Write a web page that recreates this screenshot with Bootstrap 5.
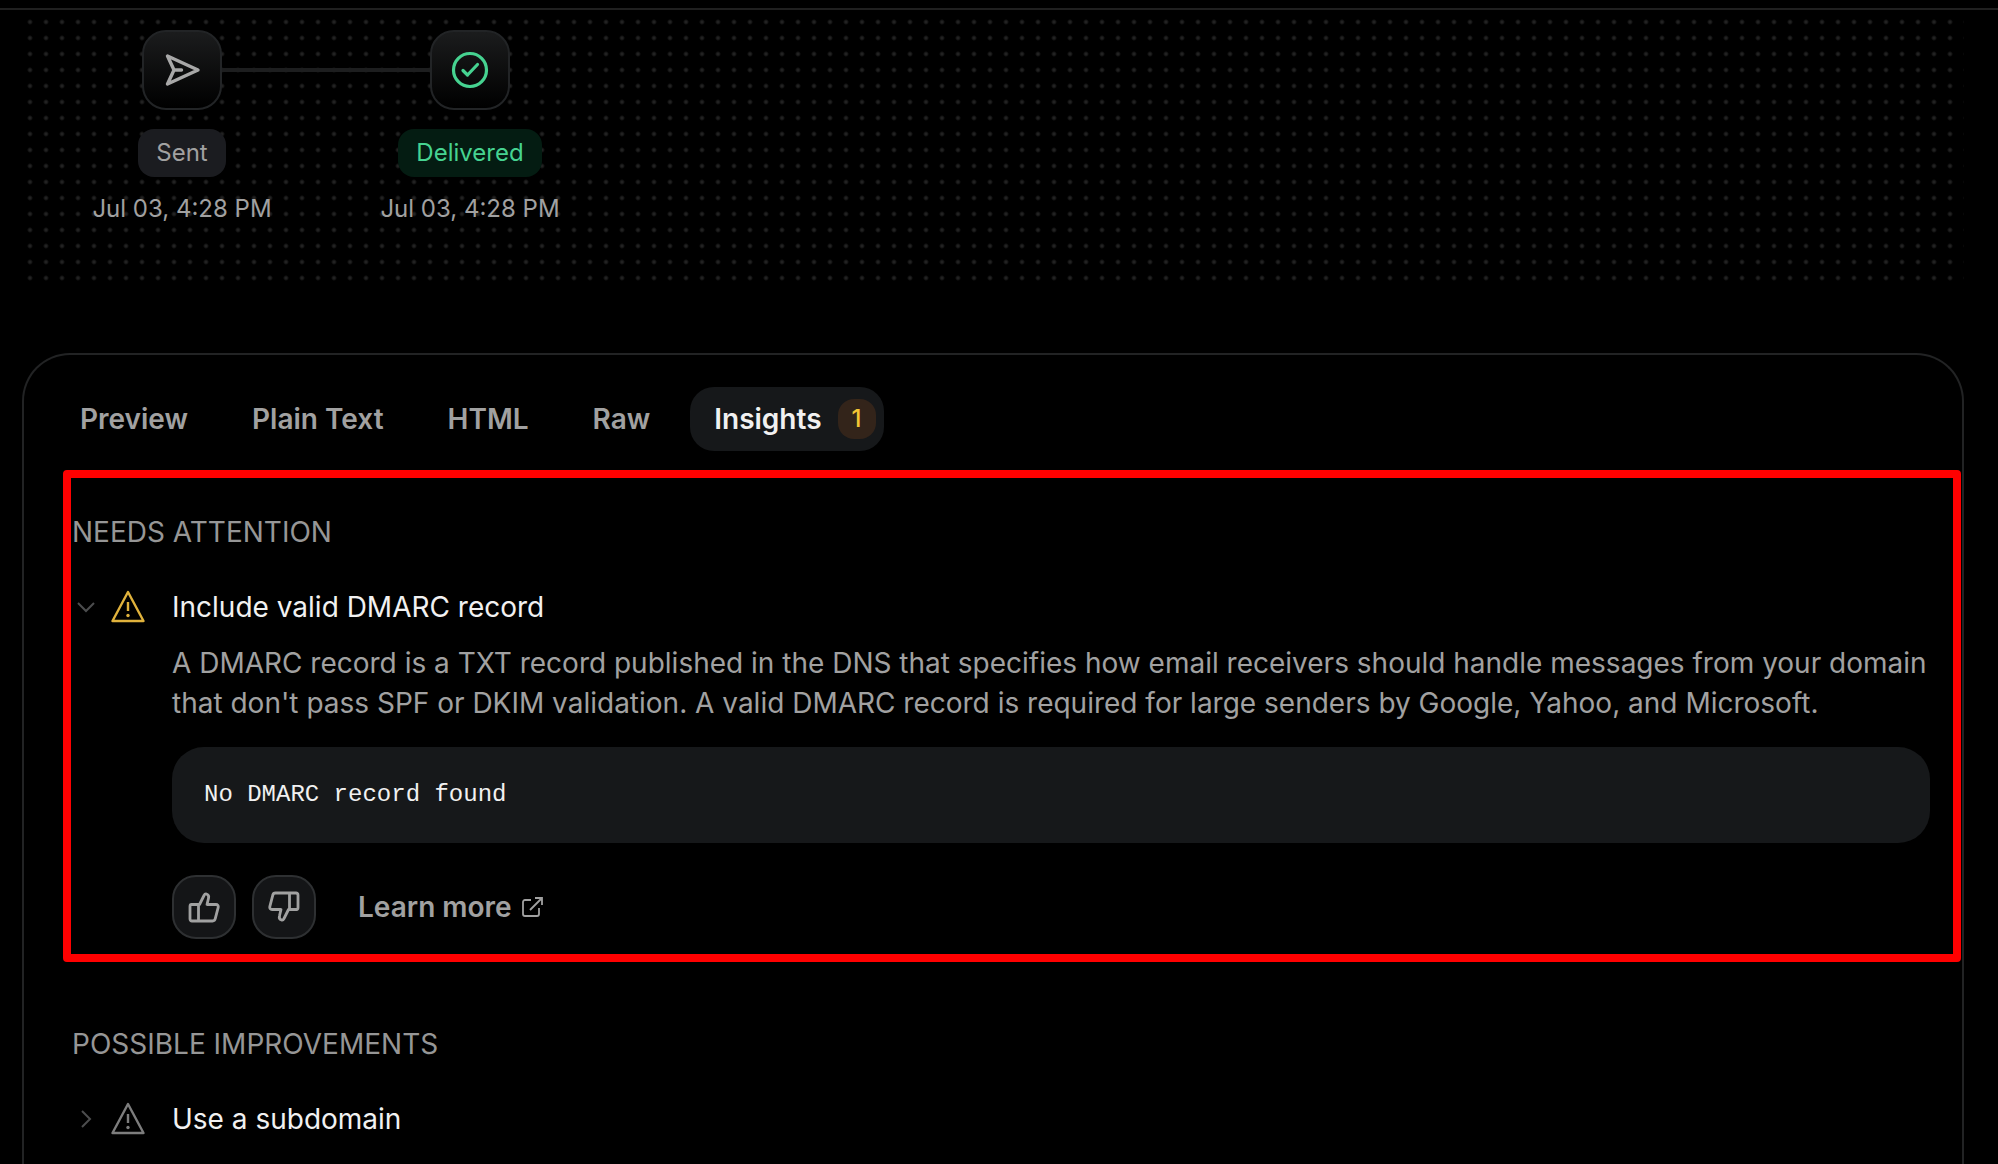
<!DOCTYPE html>
<html lang="en" data-bs-theme="dark">
<head>
<meta charset="utf-8">
<meta name="viewport" content="width=device-width, initial-scale=1">
<title>Email insights</title>
<link href="https://cdn.jsdelivr.net/npm/bootstrap@5.3.0/dist/css/bootstrap.min.css" rel="stylesheet">
<style>
  body { background: #000; color: #a1a1a1; font-family: Inter, "Liberation Sans", sans-serif; font-size: 28px; line-height: 40px; font-optical-sizing: none; }
  .topline { height: 10px; border-bottom: 2px solid #202020; }
  .stage { margin: 4px 34px 0 22px; padding: 16px 16px 59px; background: radial-gradient(circle, #222 0 1px, transparent 3px) 0 0 / 16px 16px; }
  .step { width: 288px; font-size: 24px; line-height: 36px; position: relative; }
  .step + .step::before { content: ""; position: absolute; top: 38px; right: calc(50% + 40px); width: calc(100% - 80px); height: 4px; background: #1d1e1f; }
  .tile { width: 80px; height: 80px; border: 2px solid #222426; border-radius: 24px; background: linear-gradient(#1b1c1d, #000); }
  .pill { margin: 19px 0 14px; padding: 6px 18px; border-radius: 16px; background: #1b1c20; }
  .pill-ok { background: #041c12; color: #46d391; }
  .panel { margin: 67px 34px 0 22px; border: 2px solid #222324; border-radius: 48px 48px 0 0; }
  .tabs { padding: 32px 32px 19px; gap: 16px; }
  .tab { --bs-nav-link-padding-x: 24px; --bs-nav-link-padding-y: 12px; --bs-nav-link-color: #a1a1a1; --bs-nav-link-hover-color: #fff; --bs-nav-pills-border-radius: 24px; --bs-nav-pills-link-active-bg: #16181a; --bs-nav-pills-link-active-color: #f1f1f1; font-weight: 600; }
  .tab.active { padding-right: 8px; }
  .count { width: 38px; height: 40px; border-radius: 16px; background: #33241a; color: #f4c534; font-size: 24px; font-weight: 500; }
  .marked { margin: 0 1px 0 39px; padding: 34px 23px 15px 1px; border: 8px solid #f00; border-radius: 4px; }
  .improve { margin: 62px 32px 32px 48px; }
  .heading { font-size: 28px; line-height: 40px; font-weight: 400; color: #969696; margin: 0 0 32px; }
  .insight { --bs-btn-color: #f1f1f1; --bs-btn-hover-color: #fff; --bs-btn-active-color: #fff; --bs-btn-padding-x: 0; --bs-btn-padding-y: 0; --bs-btn-border-width: 0; --bs-btn-font-size: 28px; line-height: 46px; }
  .chev { width: 28px; height: 28px; margin-right: 8px; color: #4c4d4e; }
  .warn { width: 40px; height: 40px; margin-right: 24px; }
  .detail { margin-left: 100px; }
  .about { margin: 13px 0 24px; }
  .record { margin: 0 0 32px; padding: 28px 32px; border-radius: 32px; background: #16181a; color: #f1f1f1; font: 24px/40px "Liberation Mono", monospace; }
  .vote { --bs-btn-color: #a1a1a1; --bs-btn-bg: #141517; --bs-btn-border-color: #2e3032; --bs-btn-hover-color: #fff; --bs-btn-hover-border-color: #555; --bs-btn-border-radius: 24px; --bs-btn-border-width: 2px; --bs-btn-padding-x: 0; --bs-btn-padding-y: 0; width: 64px; height: 64px; }
  .more { color: #a1a1a1; font-weight: 600; margin-left: 26px; gap: 8px; }
</style>
</head>
<body class="min-vh-100 d-flex flex-column">
<svg class="d-none" xmlns="http://www.w3.org/2000/svg">
  <symbol id="warning" viewBox="0 0 40 40"><path d="M20 5 35.500 34H4.500Z M20 15v9" fill="none" stroke="currentColor" stroke-width="2.400" stroke-linejoin="round"/><circle cx="20" cy="28.500" r="1.700" fill="currentColor"/></symbol>
  <symbol id="thumb" viewBox="0 0 36 36"><path d="M12.500 15.500V32M5.500 15.500h8l4.500-9c.6-1.200 1.300-2 2.500-1.500 1.800.6 2.500 2.300 2 4.200L21 15.500h9c1.600 0 2.600 1.300 2.200 2.800l-3 11.500c-.3 1.300-1.200 2.200-2.600 2.200H6c-1.200 0-2-.8-2-2V17.500c0-1.200.6-2 1.500-2Z" fill="none" stroke="currentColor" stroke-width="2.800" stroke-linejoin="round"/></symbol>
</svg>
<header class="topline"></header>
<section class="stage d-flex" aria-label="Email events">
  <div class="step d-flex flex-column align-items-center">
    <div class="tile d-flex align-items-center justify-content-center">
      <svg width="40" height="40" viewBox="0 0 40 40" fill="none" stroke="#a8a8a8" stroke-width="3.400" stroke-linejoin="round" stroke-linecap="round"><path d="M5.500 6 36 20 5.500 34 12 20ZM12 20h7.500"/></svg>
    </div>
    <span class="pill">Sent</span>
    <time>Jul 03, 4:28 PM</time>
  </div>
  <div class="step d-flex flex-column align-items-center">
    <div class="tile d-flex align-items-center justify-content-center">
      <svg width="40" height="40" viewBox="0 0 40 40" fill="none" stroke="#46d391" stroke-width="3.200" stroke-linejoin="round" stroke-linecap="round"><circle cx="20" cy="20" r="16.500"/><path d="m13 20.500 4.500 4.500 10-10.500"/></svg>
    </div>
    <span class="pill pill-ok">Delivered</span>
    <time>Jul 03, 4:28 PM</time>
  </div>
</section>
<main class="panel border-bottom-0 flex-grow-1">
  <nav class="nav nav-pills tabs">
    <a class="nav-link tab" href="#">Preview</a>
    <a class="nav-link tab" href="#">Plain Text</a>
    <a class="nav-link tab" href="#">HTML</a>
    <a class="nav-link tab" href="#">Raw</a>
    <a class="nav-link tab active d-flex align-items-center gap-3" href="#" aria-current="page">Insights <span class="count d-flex align-items-center justify-content-center">1</span></a>
  </nav>
  <section class="marked">
    <h2 class="heading">NEEDS ATTENTION</h2>
    <button type="button" class="btn insight d-flex align-items-center" aria-expanded="true">
      <svg class="chev" viewBox="0 0 28 28" fill="none" stroke="currentColor" stroke-width="2"><path d="m6 10 8 8 8-8"/></svg>
      <svg class="warn" color="#e0b23c"><use href="#warning"/></svg>
      Include valid DMARC record
    </button>
    <div class="detail">
      <p class="about">A DMARC record is a TXT record published in the DNS that specifies how email receivers should handle messages from your domain that don't pass SPF or DKIM validation. A valid DMARC record is required for large senders by Google, Yahoo, and Microsoft.</p>
      <pre class="record">No DMARC record found</pre>
      <div class="d-flex align-items-center gap-3">
        <button type="button" class="btn vote d-flex align-items-center justify-content-center" aria-label="Helpful"><svg width="36" height="36"><use href="#thumb"/></svg></button>
        <button type="button" class="btn vote d-flex align-items-center justify-content-center" aria-label="Not helpful"><svg width="36" height="36"><use href="#thumb" transform="rotate(180 18 18)"/></svg></button>
        <a class="more d-flex align-items-center text-decoration-none" href="#">Learn more <svg width="24" height="24" viewBox="0 0 24 24" fill="none" stroke="currentColor" stroke-width="1.800"><path d="M11 5H5a2 2 0 0 0-2 2v12a2 2 0 0 0 2 2h12a2 2 0 0 0 2-2v-6M15 3h7v7M22 3 10 15"/></svg></a>
      </div>
    </div>
  </section>
  <section class="improve">
    <h2 class="heading">POSSIBLE IMPROVEMENTS</h2>
    <button type="button" class="btn insight d-flex align-items-center" aria-expanded="false">
      <svg class="chev" viewBox="0 0 28 28" fill="none" stroke="currentColor" stroke-width="2"><path d="m10 6 8 8-8 8"/></svg>
      <svg class="warn" color="#7d7d7d"><use href="#warning"/></svg>
      Use a subdomain
    </button>
  </section>
</main>
<script src="https://cdn.jsdelivr.net/npm/bootstrap@5.3.0/dist/js/bootstrap.bundle.min.js"></script>
</body>
</html>
